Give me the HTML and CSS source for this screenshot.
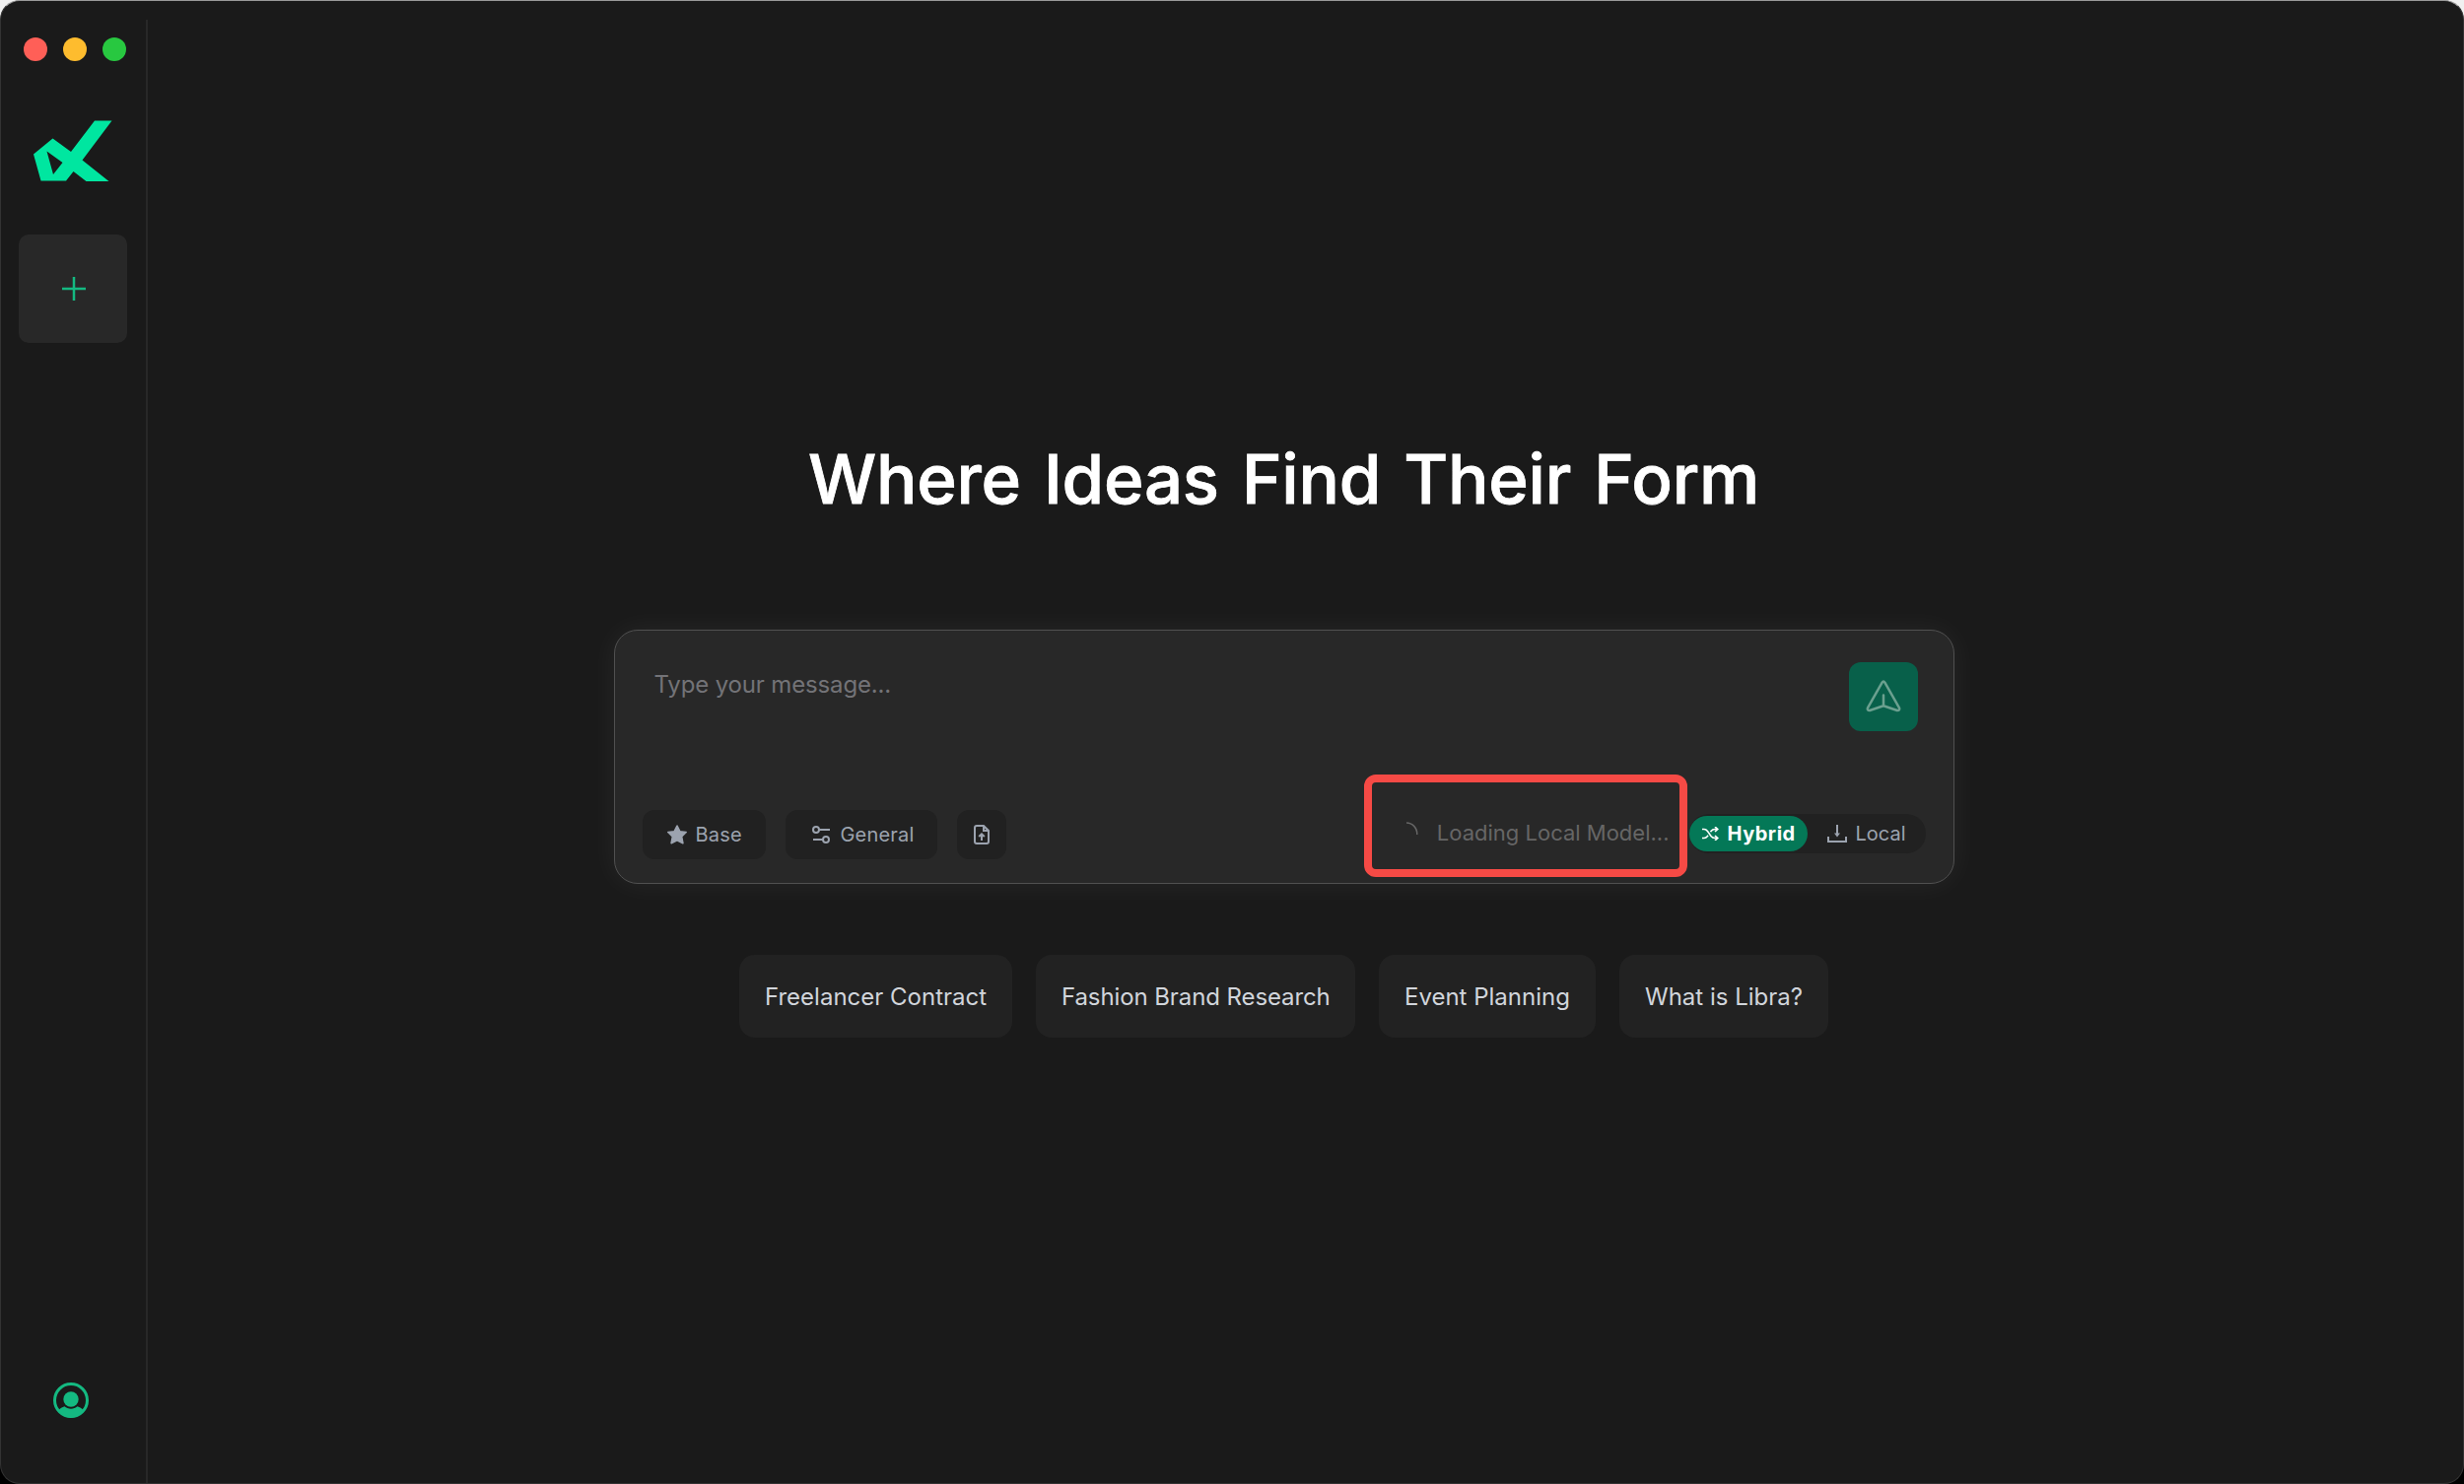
FILE: index.html
```html
<!DOCTYPE html>
<html lang="en">
<head>
<meta charset="utf-8">
<title>Libra</title>
<link rel="stylesheet" href="styles.css">
</head>
<body>
<div class="window">
  <aside class="sidebar">
    <div class="lights"><i class="light red"></i><i class="light yellow"></i><i class="light green"></i></div>
    <svg class="logo" width="80" height="62" viewBox="0 0 80 62"><path fill="#00e6a0" fill-rule="evenodd" d="M62 0.5H79.5L49.5 40.5L76.500 62H53.500L40.500 52L33 61.500H7.500L0 34.500L19.500 18.500L38 32ZM13.500 31.500L20 55L29.500 43Z"/></svg>
    <button class="new-chat" aria-label="New chat"><svg width="24" height="24" viewBox="0 0 24 24"><path d="M12 0V24M0 12H24" stroke="#14b981" stroke-width="2.500"/></svg></button>
    <svg class="account" width="36" height="36" viewBox="0 0 36 36"><circle cx="18" cy="18" r="16.500" fill="none" stroke="#14b981" stroke-width="3"/><circle cx="18" cy="17" r="7.700" fill="#14b981"/><path fill="#14b981" d="M5 28.500C7 26.500 9 25 11.500 24.300C15 27.600 21 27.600 24.500 24.300C27 25 29 26.500 31 28.500C28 33 23 35.500 18 35.500S8 33 5 28.500Z"/></svg>
  </aside>
  <main class="main">
    <h1 class="title"><span>Where Ideas Find Their Form</span></h1>
    <section class="composer">
      <div class="input-row">
        <p class="placeholder"><span>Type your message...</span></p>
        <button class="send" aria-label="Send"><svg width="36" height="34" viewBox="0 0 36 34"><path d="M16.600 2.600Q18 0.600 19.400 2.600L34 28.300Q35 31 32 31L18 26.300L4 31Q1 31 2 28.300ZM18 26V15.500" fill="none" stroke="#6ba08f" stroke-width="2.500" stroke-linecap="round" stroke-linejoin="round"/></svg></button>
      </div>
      <div class="tools">
        <button class="tool base"><svg width="22" height="20" viewBox="0 0 22 20"><path fill="#9ca3af" stroke="#9ca3af" stroke-width="1.600" stroke-linejoin="round" d="M11 1L13.800 6.700L20.200 7.500L15.600 12L16.900 18.700L11 15.900L5.100 18.700L6.400 12L1.800 7.500L8.200 6.700Z"/></svg><span>Base</span></button>
        <button class="tool general"><svg width="18" height="18" viewBox="0 0 18 18" fill="none" stroke="#9ca3af" stroke-width="2"><circle cx="4" cy="4" r="3"/><path d="M7 4H18M1 14H11"/><circle cx="14" cy="14" r="3"/></svg><span>General</span></button>
        <button class="tool upload" aria-label="Upload file"><svg width="16" height="20" viewBox="0 0 16 20" fill="none" stroke="#9ca3af" stroke-width="2"><path d="M10 1H3Q1 1 1 3V17Q1 19 3 19H13Q15 19 15 17V6ZM10 1V6H15M8 16V10M5.200 12L8 9.300L10.800 12"/></svg></button>
        <div class="loading"><svg class="spinner" width="12" height="14" viewBox="0 0 12 14"><path d="M0 1C6 1 11 6 10.800 13" fill="none" stroke="#666" stroke-width="1.500"/></svg><span>Loading Local Model...</span></div>
        <div class="switch">
          <button class="mode active"><svg width="17" height="14" viewBox="0 0 17 14" fill="none" stroke="#fff" stroke-width="1.600"><path d="M0 2.500H2Q4 2.500 5.500 4.500L9 9.500Q10.500 11.500 13 11.500H15.500M0 11.500H2Q4 11.500 5.500 9.500L6 8.800M8.500 5.200L9 4.500Q10.500 2.500 13 2.500H15.500M13 0L15.800 2.500L13 5M13 9L15.800 11.500L13 14"/></svg><span>Hybrid</span></button>
          <button class="mode local"><svg width="20" height="18" viewBox="0 0 20 18" fill="none" stroke="#9ca3af" stroke-width="2"><path d="M10 0V11M1 12V17H19V12"/><path d="M7 8.500H13L10 12.500Z" fill="#9ca3af" stroke="none"/></svg><span>Local</span></button>
        </div>
      </div>
      <div class="highlight"></div>
    </section>
    <nav class="prompts">
      <button class="prompt p1"><span>Freelancer Contract</span></button>
      <button class="prompt p2"><span>Fashion Brand Research</span></button>
      <button class="prompt p3"><span>Event Planning</span></button>
      <button class="prompt p4"><span>What is Libra?</span></button>
    </nav>
  </main>
</div>
</body>
</html>
```
FILE: styles.css
```css
* { box-sizing: border-box; }
body { margin: 0; background: linear-gradient(#f0f0f0 50%, #000 50%); font-family: Inter, "Liberation Sans", sans-serif; color: #d1d5db; }
button { border: 0; padding: 0; margin: 0; font: inherit; color: inherit; background: none; letter-spacing: inherit; }
svg { display: block; flex: none; }
span { white-space: nowrap; }
.window { width: 2500px; height: 1506px; display: flex; background: #1a1a1a; border: 1px solid #333; border-top-color: #999; border-radius: 20px; overflow: hidden; }
.sidebar { width: 149px; margin-top: 19px; border-right: 2px solid #282828; display: flex; flex-direction: column; align-items: flex-start; }
.lights { display: flex; gap: 16px; margin: 18px 0 60px 23px; }
.light { width: 24px; height: 24px; border-radius: 50%; }
.red { background: #ff5f57; }
.yellow { background: #febc2e; }
.green { background: #28c840; }
.logo { margin-left: 33px; }
.new-chat { width: 110px; height: 110px; margin: 54px 0 0 18px; border-radius: 10px; background: #282828; display: flex; align-items: center; justify-content: center; padding-left: 2px; }
.account { margin: auto 0 66px 53px; }
.main { flex: 1; display: flex; flex-direction: column; align-items: center; padding-top: 442px; }
.title { margin: 0 0 109px -44px; height: 87px; font-size: 69px; line-height: 87px; font-weight: 500; letter-spacing: -.25px; word-spacing: 5px; -webkit-text-stroke: .8px #fff; color: #fff; }
.composer { position: relative; width: 1360px; height: 258px; margin-left: -44px; border: 1px solid #505050; border-radius: 24px; background: #282828; box-shadow: 0 0 30px rgba(255, 255, 255, .06); display: flex; flex-direction: column; justify-content: space-between; padding: 32px 28px 24px; }
.input-row { display: flex; justify-content: space-between; padding: 0 8px 0 12px; }
.placeholder { margin: 8px 0 0; font-size: 24px; line-height: 30px; letter-spacing: -.15px; color: #737377; }
.send { width: 70px; height: 70px; border-radius: 12px; background: #08604a; display: flex; align-items: center; justify-content: center; }
.tools { display: flex; height: 50px; }
.tool { height: 50px; border-radius: 12px; background: #212121; display: flex; align-items: center; color: #9ca3af; font-size: 20px; letter-spacing: .2px; }
.base { width: 125px; padding-left: 24px; gap: 8px; }
.general { width: 154px; padding-left: 27px; gap: 11px; margin-left: 20px; }
.upload { width: 50px; margin-left: 20px; justify-content: center; }
.loading { display: flex; align-items: center; gap: 19px; height: 46px; margin: 0 20px 0 auto; font-size: 22px; color: #666; }
.spinner { margin-bottom: 8px; }
.switch { width: 240px; height: 40px; margin-top: 4px; border-radius: 20px; background: #212121; display: flex; align-items: center; font-size: 20px; color: #9ca3af; }
.mode { height: 36px; border-radius: 18px; display: flex; align-items: center; }
.active { width: 120px; background: #047857; color: #fff; font-weight: 700; letter-spacing: .5px; padding-left: 13px; gap: 9px; }
.local { padding-left: 20px; gap: 9px; }
.highlight { position: absolute; left: 760px; top: 146px; width: 328px; height: 104px; border: 8px solid #f64a45; border-radius: 12px; }
.prompts { display: flex; gap: 24px; margin: 72px 0 0 -44px; }
.prompt { height: 84px; border-radius: 16px; background: #222; font-size: 24px; padding-left: 26px; text-align: left; }
.p1 { width: 277px; }
.p2 { width: 324px; letter-spacing: -.1px; }
.p3 { width: 220px; }
.p4 { width: 212px; }
```
